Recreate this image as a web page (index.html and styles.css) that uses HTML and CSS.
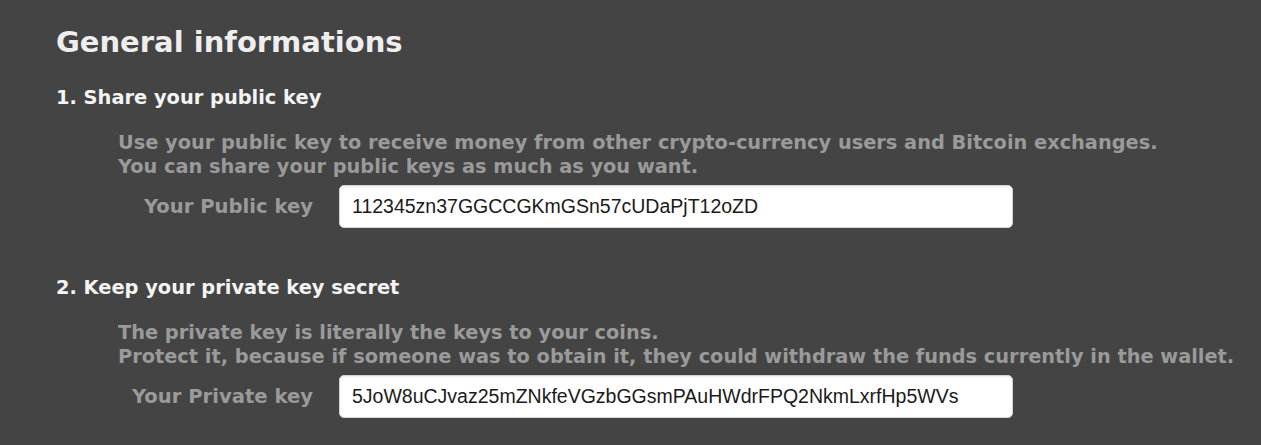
FILE: index.html
```html
<!DOCTYPE html>
<html>
<head>
<meta charset="utf-8">
<link rel="stylesheet" href="styles.css">
</head>
<body>
<div class="page">
  <h1 class="title">General informations</h1>
  <section class="step">
    <h2 class="step-title">1. Share your public key</h2>
    <p class="desc">Use your public key to receive money from other crypto-currency users and Bitcoin exchanges.<br>You can share your public keys as much as you want.</p>
    <div class="field">
      <label class="label">Your Public key</label>
      <div class="input">112345zn37GGCCGKmGSn57cUDaPjT12oZD</div>
    </div>
  </section>
  <section class="step step2">
    <h2 class="step-title">2. Keep your private key secret</h2>
    <p class="desc">The private key is literally the keys to your coins.<br>Protect it, because if someone was to obtain it, they could withdraw the funds currently in the wallet.</p>
    <div class="field">
      <label class="label">Your Private key</label>
      <div class="input">5JoW8uCJvaz25mZNkfeVGzbGGsmPAuHWdrFPQ2NkmLxrfHp5WVs</div>
    </div>
  </section>
</div>
</body>
</html>
```
FILE: styles.css
```css
html, body {
  margin: 0;
  padding: 0;
  background: #444444;
}
body {
  font-family: "DejaVu Sans", Verdana, sans-serif;
  font-weight: bold;
}
.page {
  padding: 24px 0 0 56px;
}
.title {
  margin: 0;
  font-size: 29px;
  line-height: 36px;
  color: #eeeeee;
}
.step {
  margin-top: 25px;
}
.step2 {
  margin-top: 47px;
}
.step-title {
  margin: 0;
  font-size: 19.4px;
  line-height: 26px;
  color: #f4f4f4;
}
.desc {
  margin: 20px 0 0 62px;
  font-size: 19.35px;
  line-height: 24px;
  color: #9a9a9a;
}
.field {
  display: flex;
  align-items: center;
  margin-top: 6px;
}
.label {
  width: 257px;
  text-align: right;
  font-size: 19.6px;
  color: #9a9a9a;
}
.input {
  margin-left: 26px;
  width: 660px;
  height: 41px;
  box-sizing: content-box;
  padding: 0 0 0 12px;
  background: #ffffff;
  border: 1px solid #d4d4d4;
  border-radius: 5px;
  box-shadow: inset 0 1px 2px rgba(0, 0, 0, 0.08);
  display: flex;
  align-items: center;
  font-family: "Liberation Sans", Arial, sans-serif;
  font-weight: normal;
  font-size: 19.5px;
  color: #1a1a1a;
}
```
